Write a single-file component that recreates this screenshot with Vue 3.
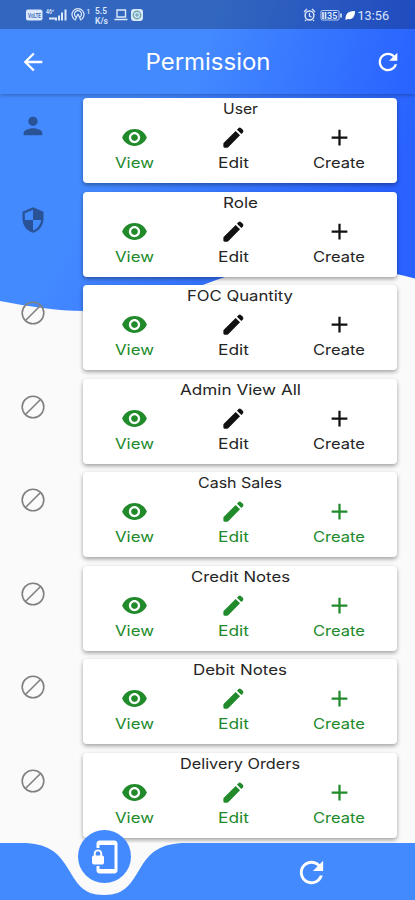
<script setup>
const icons = {
  person: 'M12 12c2.21 0 4-1.79 4-4s-1.79-4-4-4-4 1.79-4 4 1.79 4 4 4zm0 2c-2.67 0-8 1.34-8 4v2h16v-2c0-2.66-5.33-4-8-4z',
  security: 'M12 1L3 5v6c0 5.55 3.84 10.74 9 12 5.16-1.26 9-6.45 9-12V5l-9-4zm0 10.99h7c-.53 4.12-3.28 7.79-7 8.94V12H5V6.3l7-3.11v8.8z',
  eye: 'M12 4.5C7 4.5 2.73 7.61 1 12c1.73 4.39 6 7.5 11 7.5s9.27-3.11 11-7.5c-1.73-4.39-6-7.5-11-7.5zM12 17c-2.76 0-5-2.24-5-5s2.24-5 5-5 5 2.24 5 5-2.24 5-5 5zm0-8c-1.66 0-3 1.34-3 3s1.34 3 3 3 3-1.34 3-3-1.34-3-3-3z',
  pencil: 'M3 17.600Q3 17.100 3.400 16.700L13.900 6.200L17.800 10.100L7.300 20.600Q6.900 21 6.400 21H4Q3 21 3 20ZM15.100 5L16.500 3.600Q17.600 2.700 18.800 3.700L20.300 5.200Q21.300 6.400 20.400 7.500L19 8.900Z',
  plus: 'M19 13h-6v6h-2v-6H5v-2h6V5h2v6h6v2z',
  refresh: 'M17.65 6.35C16.2 4.9 14.21 4 12 4c-4.42 0-7.99 3.58-7.99 8s3.57 8 7.99 8c3.73 0 6.84-2.55 7.73-6h-2.08c-.82 2.33-3.04 4-5.65 4-3.31 0-6-2.69-6-6s2.69-6 6-6c1.66 0 3.14.69 4.22 1.78L13 11h7V4l-2.35 2.35z',
  back: 'M20 11H7.83l5.59-5.59L12 4l-8 8 8 8 1.41-1.41L7.83 13H20v-2z',
}

const rows = [
  { title: 'User', width: 35, icon: 'person', full: false },
  { title: 'Role', width: 35, icon: 'security', full: false },
  { title: 'FOC Quantity', width: 106, full: false },
  { title: 'Admin View All', width: 121, full: false },
  { title: 'Cash Sales', width: 84, full: true },
  { title: 'Credit Notes', width: 99, full: true },
  { title: 'Debit Notes', width: 94, full: true },
  { title: 'Delivery Orders', width: 120, full: true },
]

const actions = [
  { label: 'View', width: 39, icon: 'eye' },
  { label: 'Edit', width: 31, icon: 'pencil' },
  { label: 'Create', width: 52, icon: 'plus' },
]
</script>

<template>
  <div class="screen">
    <svg class="backdrop" width="415" height="320" viewBox="0 0 415 320">
      <defs>
        <linearGradient id="sky" gradientUnits="userSpaceOnUse" x1="150" y1="70" x2="385" y2="190">
          <stop offset="0" stop-color="#448aff" />
          <stop offset="1" stop-color="#2962ff" />
        </linearGradient>
      </defs>
      <path d="M0 0H415V278.500C360 263 280 263 225 277C185 290 150 311 85 311C55 311 30 306.500 0 301Z" fill="url(#sky)" />
    </svg>

    <header class="top">
      <div class="status">
        <svg class="status-left" width="120" height="20" viewBox="0 0 120 20" fill="none" stroke="#dce8fb">
          <rect x="1" y="4.500" width="16.500" height="11" rx="2" fill="#dce8fb" stroke="none" />
          <text x="3" y="12.800" textLength="13" lengthAdjust="spacingAndGlyphs" font-size="7" class="tiny dark">VoLTE</text>
          <text x="21" y="9" textLength="8" lengthAdjust="spacingAndGlyphs" font-size="6.500" class="tiny">46⁺</text>
          <path d="M24 13.500h6M31 15.500v-3M34 15.500v-5M37 15.500v-8M40.500 15.500v-11" stroke-width="2" />
          <path d="M49.500 14.500a6 6 0 1 1 7 0M51 12a3.500 3.500 0 1 1 4 0M53 9l-3 6.500M53 9l3 6.500" stroke-width="1.200" />
          <text x="61.500" y="9" font-size="6.500" class="tiny">1</text>
          <text x="70" y="8.500" textLength="12" lengthAdjust="spacingAndGlyphs" font-size="8.500" class="tiny">5.5</text>
          <text x="70" y="18.500" textLength="13" lengthAdjust="spacingAndGlyphs" font-size="8.500" class="tiny">K/s</text>
          <path d="M92 5h8.500v7H92zM89.500 14.500h13" stroke-width="1.400" />
          <rect x="106" y="4" width="12" height="12" rx="3" fill="#dce8fb" stroke="none" />
          <circle cx="112" cy="10" r="3.700" stroke="#65a8aa" stroke-width="1.400" />
          <path d="M110 10h4M112 8v4" stroke="#5d99ab" />
        </svg>
        <svg class="status-right" width="90" height="20" viewBox="0 0 90 20" fill="none" stroke="#dce6fb">
          <circle cx="7.500" cy="10.500" r="4.400" stroke-width="1.500" />
          <path d="M7.500 8v3l2 1M2 7l3-3M13 7l-3-3M4 15l-1 1M11 15l1 1" stroke-width="1.300" />
          <rect x="19" y="5.500" width="18" height="9.500" rx="1.500" stroke-width=".8" />
          <path d="M21 7v7M23.500 7v7M39 8.500v4" stroke-width="1.700" />
          <text x="25" y="13.700" font-size="9" class="tiny">35</text>
          <path d="M43.500 15c0-5 1-9 9.500-9 0 5-2 9-7 8z" fill="#fff" stroke="none" />
          <text x="55.500" y="14.500" textLength="31.500" lengthAdjust="spacingAndGlyphs" font-size="12.500" class="clock">13:56</text>
        </svg>
      </div>
      <div class="appbar">
        <svg class="nav" width="28" height="28" viewBox="0 0 24 24"><path :d="icons.back" /></svg>
        <svg class="heading" width="126" height="34" role="heading">
          <text x="0.500" y="25" textLength="125" lengthAdjust="spacingAndGlyphs">Permission</text>
        </svg>
        <svg class="nav" width="28" height="28" viewBox="0 0 24 24"><path :d="icons.refresh" /></svg>
      </div>
    </header>

    <main class="list">
      <section v-for="row in rows" :key="row.title" class="row">
        <div class="lead">
          <svg v-if="row.icon" class="faded" width="28" height="28" viewBox="0 0 24 24"><path :d="icons[row.icon]" /></svg>
          <svg v-else width="28" height="28" viewBox="0 0 28 28" fill="none" stroke="#808080" stroke-width="1.600">
            <circle cx="14" cy="14" r="10.800" /><path d="M6.700 21.300L21.300 6.700" />
          </svg>
        </div>
        <article class="card">
          <svg class="title" :width="row.width" height="20">
            <text x="0" y="16" :textLength="row.width" lengthAdjust="spacingAndGlyphs">{{ row.title }}</text>
          </svg>
          <div class="actions">
            <div v-for="(action, i) in actions" :key="action.label" class="action" :class="{ granted: i === 0 || row.full }">
              <svg width="27" height="27" viewBox="0 0 24 24"><path :d="icons[action.icon]" /></svg>
              <svg class="label" :width="action.width" height="18">
                <text x="0" y="14.500" :textLength="action.width" lengthAdjust="spacingAndGlyphs">{{ action.label }}</text>
              </svg>
            </div>
          </div>
        </article>
      </section>
    </main>

    <footer class="bottom">
      <svg class="notch" width="415" height="57" viewBox="0 0 415 57">
        <path d="M22 0C47 0 58 9 67 24C77 40 82 52 104 52C126 52 131 40 141 24C150 9 161 0 186 0Z" fill="#fafafa" />
      </svg>
      <div class="bubble">
        <svg width="36" height="36" viewBox="0 0 24 24"><path d="M19 1H9c-1.100 0-2 .9-2 2v3h2V4h10v16H9v-2H7v3c0 1.100.9 2 2 2h10c1.100 0 2-.9 2-2V3c0-1.100-.9-2-2-2zm-8.200 10V9.500C10.800 8.100 9.400 7 8 7S5.200 8.100 5.200 9.500V11c-.6 0-1.200.6-1.200 1.200v3.500c0 .7.600 1.300 1.200 1.300h5.500c.7 0 1.300-.6 1.300-1.200v-3.500c0-.7-.6-1.300-1.200-1.300zm-1.300 0h-3V9.500c0-.8.700-1.300 1.500-1.300s1.500.5 1.500 1.300V11z" /></svg>
      </div>
      <svg class="reload" width="35" height="35" viewBox="0 0 24 24"><path :d="icons.refresh" /></svg>
    </footer>
  </div>
</template>

<style>
body { margin: 0; overflow: hidden; }
</style>

<style scoped>
.screen { position: relative; width: 415px; height: 900px; overflow: hidden; background: #fafafa; font-family: Inter, "Open Sans", sans-serif; }
svg { display: block; flex: none; }
.backdrop { position: absolute; left: 0; top: 0; }
.top { position: relative; z-index: 1; height: 94px; background: linear-gradient(105deg, #448aff 48%, #2962ff 100%); box-shadow: 0 1px 4px rgba(0, 0, 0, .3); }
.status { display: flex; justify-content: space-between; box-sizing: border-box; height: 29px; padding: 5px 16px 0 24.500px; background: rgba(0, 0, 0, .25); }
.status-right { margin-right: 7px; }
.status .tiny { fill: #dce8fb; stroke: none; font-family: Roboto, sans-serif; font-weight: 600; }
.status .dark { fill: #3868b8; }
.status .clock { fill: #dce6fb; stroke: none; font-family: Roboto, sans-serif; }
.appbar { display: flex; align-items: center; justify-content: space-between; height: 65px; padding: 0 13px 0 19px; }
.nav { fill: #fff; }
.heading { fill: #fff; font-size: 22.500px; font-weight: 400; }
.appbar .heading { margin-left: -6px; }
.list { position: relative; padding-top: 4px; }
.row { display: grid; grid-template-columns: 65px 314px; column-gap: 18px; height: 93.500px; }
.lead { display: flex; justify-content: center; padding-top: 14px; }
.faded { fill: #2a5296; }
.card { display: flex; flex-direction: column; align-items: center; height: 85px; border-radius: 4px; background: #fff; box-shadow: 0 2px 4px rgba(0, 0, 0, .36); }
.title { overflow: visible; fill: #252525; font-size: 14.500px; }
.actions { display: flex; justify-content: space-around; align-self: stretch; padding-top: 6px; }
.action { display: flex; flex-direction: column; align-items: center; fill: #111; }
.label { overflow: visible; margin-top: 2px; font-size: 14.500px; fill: #252525; }
.granted, .granted .label { fill: #218a2b; }
.bottom { position: absolute; left: 0; bottom: 0; z-index: 2; width: 415px; height: 57px; background: #448aff; }
.notch { position: absolute; left: 0; top: 0; }
.bubble { position: absolute; left: 77.500px; top: -13px; display: flex; align-items: center; justify-content: center; width: 53px; height: 53px; border-radius: 50%; background: #448aff; fill: #fff; }
.reload { position: absolute; left: 294px; top: 11.500px; fill: #fff; }
</style>
